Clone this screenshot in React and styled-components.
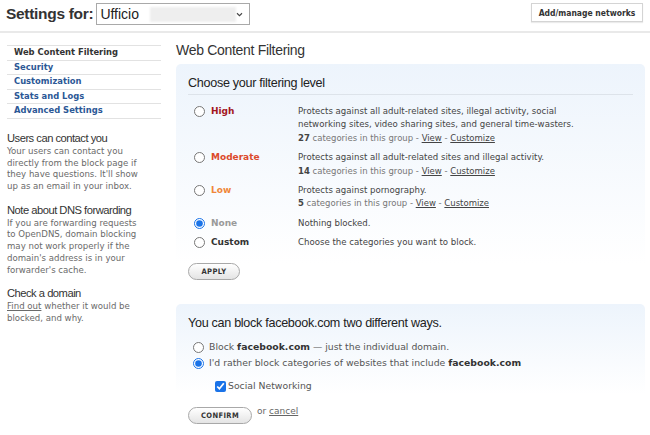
import React from 'react';
import styled, { createGlobalStyle } from 'styled-components';

const Global = createGlobalStyle`
  body {
    margin: 0;
    background: #fff;
    font-family: "DejaVu Sans", Verdana, sans-serif;
    color: #444;
  }
`;

const levels = [
  {
    key: 'high',
    name: 'High',
    color: '#a3161e',
    desc: 'Protects against all adult-related sites, illegal activity, social networking sites, video sharing sites, and general time-wasters.',
    count: 27,
  },
  {
    key: 'moderate',
    name: 'Moderate',
    color: '#dc4a2c',
    desc: 'Protects against all adult-related sites and illegal activity.',
    count: 14,
  },
  {
    key: 'low',
    name: 'Low',
    color: '#f0873a',
    desc: 'Protects against pornography.',
    count: 5,
  },
  { key: 'none', name: 'None', color: '#9a9a9a', desc: 'Nothing blocked.' },
  { key: 'custom', name: 'Custom', color: '#333', desc: 'Choose the categories you want to block.' },
];

const nav = ['Web Content Filtering', 'Security', 'Customization', 'Stats and Logs', 'Advanced Settings'];

export default function App() {
  return (
    <>
      <Global />
      <Header>
        <HeaderLeft>
          <PageTitle>Settings for:</PageTitle>
          <Select>
            <span>Ufficio</span>
            <Redacted />
            <Chevron viewBox="0 0 8 6">
              <path d="M1 1.5 L4 4.5 L7 1.5" fill="none" stroke="#444" strokeWidth="1.3" />
            </Chevron>
          </Select>
        </HeaderLeft>
        <ManageButton>Add/manage networks</ManageButton>
      </Header>

      <Layout>
        <Sidebar>
          <Nav>
            {nav.map((n, i) => (
              <NavItem key={n} active={i === 0}>{n}</NavItem>
            ))}
          </Nav>

          <Note>
            <NoteTitle>Users can contact you</NoteTitle>
            <NoteText>Your users can contact you directly from the block page if they have questions. It'll show up as an email in your inbox.</NoteText>
          </Note>
          <Note>
            <NoteTitle>Note about DNS forwarding</NoteTitle>
            <NoteText>If you are forwarding requests to OpenDNS, domain blocking may not work properly if the domain's address is in your forwarder's cache.</NoteText>
          </Note>
          <Note>
            <NoteTitle>Check a domain</NoteTitle>
            <NoteText><u>Find out</u> whether it would be blocked, and why.</NoteText>
          </Note>
        </Sidebar>

        <Main>
          <MainTitle>Web Content Filtering</MainTitle>

          <Panel>
            <PanelTitle underline>Choose your filtering level</PanelTitle>
            <Levels>
              {levels.map((l) => (
                <LevelRow key={l.key}>
                  <LevelLabel color={l.color}>
                    <Radio type="radio" name="level" defaultChecked={l.key === 'none'} />
                    {l.name}
                  </LevelLabel>
                  <LevelDesc>
                    <div>{l.desc}</div>
                    {l.count && (
                      <Meta>
                        <b>{l.count}</b> categories in this group - <u>View</u> - <u>Customize</u>
                      </Meta>
                    )}
                  </LevelDesc>
                </LevelRow>
              ))}
            </Levels>
            <PillButton width={52}>APPLY</PillButton>
          </Panel>

          <Panel second>
            <PanelTitle>You can block facebook.com two different ways.</PanelTitle>
            <Choice>
              <Radio type="radio" name="fb" />
              <span>Block <b>facebook.com</b> — just the individual domain.</span>
            </Choice>
            <Choice>
              <Radio type="radio" name="fb" defaultChecked />
              <span>I'd rather block categories of websites that include <b>facebook.com</b></span>
            </Choice>
            <CheckRow>
              <Check type="checkbox" defaultChecked />
              Social Networking
            </CheckRow>
            <Actions>
              <PillButton width={64}>CONFIRM</PillButton>
              <span>or <u>cancel</u></span>
            </Actions>
          </Panel>
        </Main>
      </Layout>
    </>
  );
}

const Header = styled.div`
  display: flex;
  justify-content: space-between;
  align-items: flex-start;
  height: 28px;
  padding: 3px 7px 0 6px;
  border-bottom: 2px solid #e9e9e9;
`;

const HeaderLeft = styled.div`
  display: flex;
  align-items: center;
  gap: 3px;
`;

const PageTitle = styled.div`
  font-family: "Liberation Sans", Arial, sans-serif;
  font-weight: bold;
  font-size: 15.5px;
  letter-spacing: -0.3px;
  color: #333;
`;

const Select = styled.div`
  position: relative;
  display: flex;
  align-items: center;
  box-sizing: border-box;
  width: 154px;
  height: 22px;
  border: 1px solid #a9a9a9;
  background: #fff;
  padding-left: 3px;
  font-family: "Liberation Sans", Arial, sans-serif;
  font-size: 14px;
  color: #222;
`;

const Redacted = styled.div`
  position: absolute;
  left: 53px;
  top: 3px;
  width: 86px;
  height: 15px;
  background: #eeeeee;
  filter: blur(1px);
`;

const Chevron = styled.svg`
  position: absolute;
  right: 6px;
  top: 8px;
  width: 7px;
  height: 5px;
`;

const ManageButton = styled.div`
  width: 112px;
  height: 19px;
  box-sizing: border-box;
  display: flex;
  align-items: center;
  justify-content: center;
  border: 1px solid #d4d4d4;
  box-shadow: 0 1px 1px rgba(0, 0, 0, 0.08);
  font-family: "DejaVu Sans Condensed", "DejaVu Sans", sans-serif;
  font-weight: bold;
  font-size: 8.5px;
  color: #333;
  background: #fff;
`;

const Layout = styled.div`
  display: flex;
  padding: 0 5px 0 7px;
`;

const Sidebar = styled.div`
  width: 154px;
  flex-shrink: 0;
  padding-top: 12px;
`;

const Nav = styled.div`
  border-top: 1px solid #e2e2e2;
  margin-bottom: 13px;
`;

const NavItem = styled.div`
  height: 13.6px;
  line-height: 13.6px;
  padding-left: 7px;
  border-bottom: 1px solid #e2e2e2;
  font-weight: bold;
  font-size: 8.4px;
  color: ${(p) => (p.active ? '#333' : '#2c5896')};
`;

const Note = styled.div`
  margin-bottom: 11px;
`;

const NoteTitle = styled.div`
  font-family: "Liberation Sans", Arial, sans-serif;
  font-size: 11.2px;
  line-height: 13px;
  margin-bottom: 1px;
  letter-spacing: -0.5px;
  color: #333;
`;

const NoteText = styled.div`
  font-size: 8.6px;
  line-height: 11.7px;
  color: #6a6a6a;
  width: 134px;
`;

const Main = styled.div`
  flex: 1;
  margin-left: 15px;
`;

const MainTitle = styled.div`
  font-family: "Liberation Sans", Arial, sans-serif;
  font-size: 14px;
  letter-spacing: -0.3px;
  color: #333;
  padding-top: 9px;
  height: 22px;
`;

const Panel = styled.div`
  border-radius: 5px;
  background: linear-gradient(#edf4fc, #ffffff ${(p) => (p.second ? '90px' : '200px')});
  padding: 12px 12px 10px 12px;
  margin-bottom: ${(p) => (p.second ? '0' : '14px')};
  min-height: ${(p) => (p.second ? '0' : '204px')};
`;

const PanelTitle = styled.div`
  font-family: "Liberation Sans", Arial, sans-serif;
  font-size: 12.6px;
  line-height: 15px;
  letter-spacing: -0.3px;
  color: #222;
  padding-bottom: ${(p) => (p.underline ? '3px' : '0')};
  border-bottom: ${(p) => (p.underline ? '1px solid #dde3ea' : 'none')};
  margin-bottom: ${(p) => (p.underline ? '10px' : '8px')};
`;

const Levels = styled.div`
  display: flex;
  flex-direction: column;
  gap: 6px;
  margin-bottom: 13px;
`;

const LevelRow = styled.div`
  display: flex;
  font-size: 8.6px;
  line-height: 13.4px;
`;

const LevelLabel = styled.label`
  box-sizing: border-box;
  width: 110px;
  flex-shrink: 0;
  display: flex;
  align-items: flex-start;
  gap: 6px;
  padding-left: 6px;
  font-weight: bold;
  font-size: 9px;
  color: ${(p) => p.color};
`;

const Radio = styled.input`
  width: 11px;
  height: 11px;
  margin: 1px 0 0 0;
  accent-color: #1a73e8;
`;

const LevelDesc = styled.div`
  color: #444;
  width: 305px;
`;

const Meta = styled.div`
  font-size: 8.5px;
  color: #777;
  b {
    color: #444;
  }
  u {
    color: #444;
  }
`;

const PillButton = styled.div`
  width: ${(p) => p.width}px;
  height: 17px;
  box-sizing: border-box;
  display: flex;
  align-items: center;
  justify-content: center;
  border: 1px solid #a8a8a8;
  border-radius: 9px;
  background: linear-gradient(#ffffff, #e4e4e4);
  font-family: "DejaVu Sans Condensed", "DejaVu Sans", sans-serif;
  font-weight: bold;
  font-size: 7.5px;
  letter-spacing: 0.4px;
  color: #333;
`;

const Choice = styled.label`
  display: flex;
  align-items: center;
  gap: 5px;
  padding-left: 5px;
  font-size: 9.3px;
  line-height: 16px;
  color: #555;
  b {
    color: #333;
  }
`;

const CheckRow = styled.label`
  display: flex;
  align-items: center;
  gap: 2px;
  padding-left: 27px;
  margin: 9px 0 15px;
  font-size: 9.3px;
  line-height: 12px;
  color: #555;
`;

const Check = styled.input`
  width: 11px;
  height: 11px;
  margin: 0;
  accent-color: #1a73e8;
`;

const Actions = styled.div`
  display: flex;
  align-items: flex-start;
  gap: 5px;
  font-size: 9px;
  color: #666;
  span {
    margin-top: -1px;
  }
`;
